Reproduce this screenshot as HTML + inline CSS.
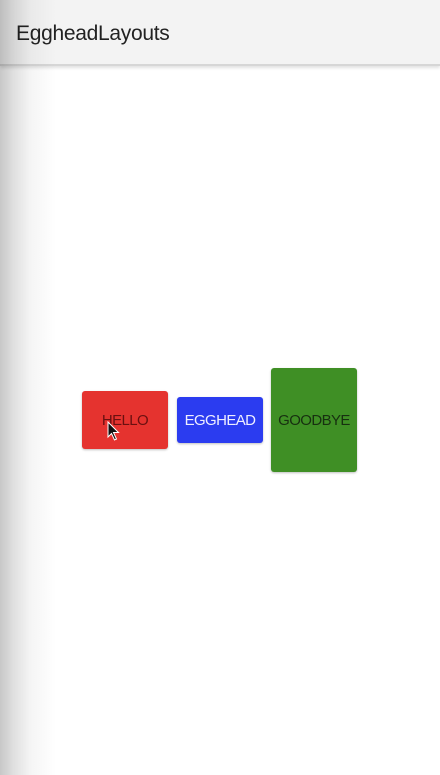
<!DOCTYPE html>
<html><head><meta charset="utf-8"><style>
html,body{margin:0;padding:0;width:440px;height:775px;overflow:hidden;background:#fff;font-family:"Liberation Sans",sans-serif;}
.hdr{position:absolute;left:0;top:0;width:440px;height:64px;background:#f3f3f3;border-bottom:2px solid #d6d6d6;box-shadow:0 2px 3px rgba(0,0,0,.12);}
.hdr span{position:absolute;left:16px;top:22px;font-size:21px;color:#222;letter-spacing:-0.3px;}
.shadow{position:absolute;left:0;top:0;width:56px;height:775px;z-index:2;background:linear-gradient(to right,rgba(0,0,0,.22) 0%,rgba(0,0,0,.12) 25%,rgba(0,0,0,.04) 55%,rgba(0,0,0,0) 100%);}
.b{position:absolute;border-radius:3px;display:flex;align-items:center;justify-content:center;font-size:15px;letter-spacing:-0.6px;box-shadow:0 1px 2px rgba(0,0,0,.25);}
</style></head><body>
<div class="hdr"><span>EggheadLayouts</span></div>
<div class="shadow"></div>
<div class="b" style="left:82px;top:391px;width:86px;height:58px;background:#e5332f;color:#6a1010;">HELLO</div>
<div class="b" style="left:177px;top:397px;width:86px;height:46px;background:#2b3cf0;color:#eef;">EGGHEAD</div>
<div class="b" style="left:271px;top:368px;width:86px;height:104px;background:#3f8f25;color:#173010;">GOODBYE</div>
<svg style="position:absolute;left:107px;top:421px" width="14" height="22" viewBox="0 0 14 22"><path d="M1 1 L1 16 L4.5 12.5 L7.5 19 L9.5 18 L6.5 11.5 L11.5 11.5 Z" fill="#111" stroke="#fff" stroke-width="1"/></svg>
</body></html>
